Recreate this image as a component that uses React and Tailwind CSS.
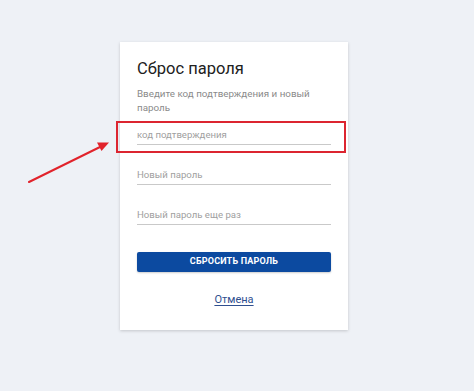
import React from 'react';

const Field = ({ placeholder, className = '' }) => (
  <div className={`border-b border-[#c9c9c9] h-[19px] flex items-end pb-[2px] ${className}`}>
    <input
      type="text"
      placeholder={placeholder}
      className="w-full bg-transparent outline-none text-[9.6px] leading-[14px] text-[#333] placeholder-[#a0a0a0]"
    />
  </div>
);

export default function App() {
  return (
    <div
      className="relative w-[474px] h-[391px] bg-[#eef1f6] overflow-hidden"
      style={{ fontFamily: 'Roboto, "Noto Sans", sans-serif' }}
    >
      {/* annotation arrow */}
      <svg className="absolute left-0 top-0" width="474" height="391" viewBox="0 0 474 391">
        <line x1="29" y1="182" x2="101" y2="146.5" stroke="#e1232b" strokeWidth="2" strokeLinecap="round" />
        <polygon points="109,142.5 97,142.5 101.5,151" fill="#e1232b" />
      </svg>

      <div className="relative ml-[120px] mt-[42px] w-[228px] h-[288px] bg-white shadow-[0_1px_3px_rgba(0,0,0,0.18)] px-[17px] pt-[16px]">
        <h1 className="text-[16.5px] leading-[22px] text-[#212121] font-normal">Сброс пароля</h1>
        <p className="mt-[7px] text-[9.8px] leading-[14px] text-[#8a8a8a]">
          <span className="whitespace-nowrap">Введите код подтверждения и новый</span>
          <br />
          пароль
        </p>

        <Field placeholder="код подтверждения" className="mt-[11px]" />
        <Field placeholder="Новый пароль" className="mt-[21px]" />
        <Field placeholder="Новый пароль еще раз" className="mt-[21px]" />

        <button className="mt-[27px] w-full h-[20px] bg-[#0c4aa0] rounded-[2px] shadow-[0_1px_2px_rgba(0,0,0,0.2)] text-white text-[9px] font-bold tracking-[0.2px] flex items-center justify-center">
          СБРОСИТЬ ПАРОЛЬ
        </button>

        <div className="mt-[21px] text-center text-[11px] leading-[14px]">
          <a href="#" className="text-[#2f4f8f] underline underline-offset-2">
            Отмена
          </a>
        </div>

        {/* red highlight frame */}
        <div className="absolute left-[-4px] top-[79px] w-[230px] h-[32px] border-2 border-[#dc2530]" />
      </div>
    </div>
  );
}
